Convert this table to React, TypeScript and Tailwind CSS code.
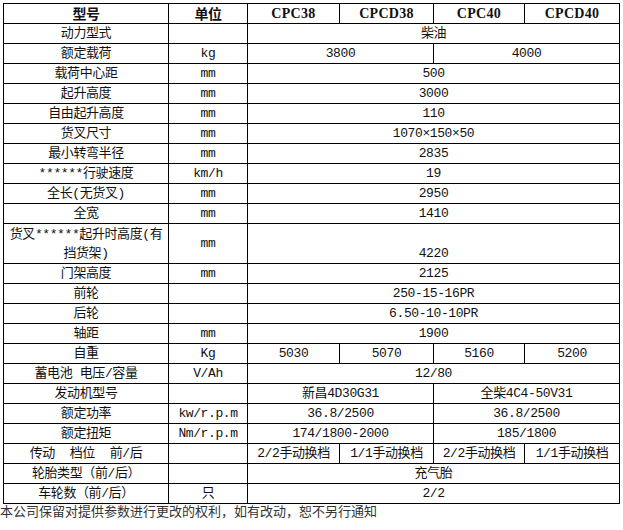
import React from "react";

type Row = {
  name: React.ReactNode;
  unit?: string;
  cells: { text: string; span: number }[];
  tall?: boolean;
};

const all = (text: string) => [{ text, span: 4 }];
const half = (a: string, b: string) => [
  { text: a, span: 2 },
  { text: b, span: 2 },
];
const each = (...t: string[]) => t.map((text) => ({ text, span: 1 }));

const rows: Row[] = [
  { name: "动力型式", cells: all("柴油") },
  { name: "额定载荷", unit: "kg", cells: half("3800", "4000") },
  { name: "载荷中心距", unit: "mm", cells: all("500") },
  { name: "起升高度", unit: "mm", cells: all("3000") },
  { name: "自由起升高度", unit: "mm", cells: all("110") },
  { name: "货叉尺寸", unit: "mm", cells: all("1070×150×50") },
  { name: "最小转弯半径", unit: "mm", cells: all("2835") },
  { name: "******行驶速度", unit: "km/h", cells: all("19") },
  { name: "全长(无货叉)", unit: "mm", cells: all("2950") },
  { name: "全宽", unit: "mm", cells: all("1410") },
  {
    name: (
      <>
        货叉******起升时高度(有
        <br />
        挡货架)
      </>
    ),
    unit: "mm",
    cells: all("4220"),
    tall: true,
  },
  { name: "门架高度", unit: "mm", cells: all("2125") },
  { name: "前轮", cells: all("250-15-16PR") },
  { name: "后轮", cells: all("6.50-10-10PR") },
  { name: "轴距", unit: "mm", cells: all("1900") },
  { name: "自重", unit: "Kg", cells: each("5030", "5070", "5160", "5200") },
  { name: "蓄电池 电压/容量", unit: "V/Ah", cells: all("12/80") },
  { name: "发动机型号", cells: half("新昌4D30G31", "全柴4C4-50V31") },
  { name: "额定功率", unit: "kw/r.p.m", cells: half("36.8/2500", "36.8/2500") },
  { name: "额定扭矩", unit: "Nm/r.p.m", cells: half("174/1800-2000", "185/1800") },
  {
    name: "传动  档位  前/后",
    cells: each("2/2手动换档", "1/1手动换档", "2/2手动换档", "1/1手动换档"),
  },
  { name: "轮胎类型（前/后）", cells: all("充气胎") },
  { name: "车轮数（前/后）", unit: "只", cells: all("2/2") },
];

const cell = "border border-black p-0 text-center align-middle leading-[19px]";

export default function App() {
  return (
    <div
      className="w-[623px] h-[530px] bg-white text-[#111] text-[13px] tracking-[-0.4px]"
      style={{ fontFamily: '"Liberation Mono", "Noto Sans CJK SC", monospace' }}
    >
      <div className="pt-[3px] pl-[3px]">
        <table className="table-fixed border-collapse w-[616px]">
          <colgroup>
            <col className="w-[165px]" />
            <col className="w-[79px]" />
            <col className="w-[92px]" />
            <col className="w-[94px]" />
            <col className="w-[91px]" />
            <col className="w-[95px]" />
          </colgroup>
          <thead>
            <tr className="h-[20px] font-bold">
              <th className={`${cell} text-[14px]`} style={{ fontFamily: '"Noto Sans CJK SC", sans-serif' }}>
                型号
              </th>
              <th className={`${cell} text-[14px]`} style={{ fontFamily: '"Noto Sans CJK SC", sans-serif' }}>
                单位
              </th>
              {["CPC38", "CPCD38", "CPC40", "CPCD40"].map((m) => (
                <th
                  key={m}
                  className={`${cell} text-[14px] tracking-[0.3px]`}
                  style={{ fontFamily: '"Liberation Serif", serif' }}
                >
                  {m}
                </th>
              ))}
            </tr>
          </thead>
          <tbody>
            {rows.map((r, i) => (
              <tr key={i} className={r.tall ? "h-[40px]" : "h-[20px]"}>
                <td className={`${cell} whitespace-pre`}>{r.name}</td>
                <td className={cell}>{r.unit ?? ""}</td>
                {r.cells.map((c, j) => (
                  <td
                    key={j}
                    colSpan={c.span}
                    className={`${cell} whitespace-pre ${r.tall ? "!align-bottom" : ""}`}
                  >
                    {c.text}
                  </td>
                ))}
              </tr>
            ))}
          </tbody>
        </table>
      </div>
      <p className="leading-[18px] text-[#333] tracking-normal">
        本公司保留对提供参数进行更改的权利，如有改动，恕不另行通知
      </p>
    </div>
  );
}
